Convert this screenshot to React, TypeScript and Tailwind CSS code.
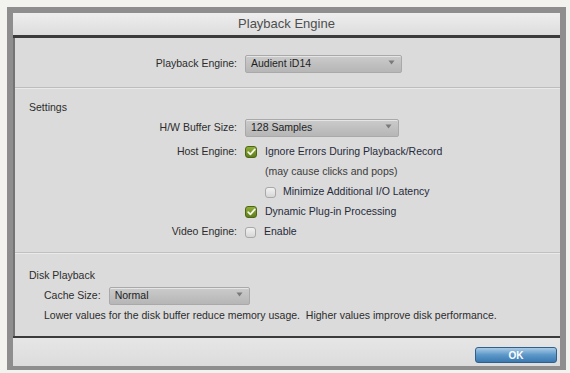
import React from "react";

function Arrow() {
  return (
    <svg width="7" height="5" viewBox="0 0 7 5" className="absolute right-[6px] top-[4px]">
      <path d="M0.5 0.5 L6.5 0.5 L3.5 4.5 Z" fill="#7a7a7a" />
    </svg>
  );
}

function Dropdown({ text, w }: { text: string; w: string }) {
  return (
    <div
      className={`relative ${w} h-[18px] rounded-[2px] border border-[#a9a9a9] bg-gradient-to-b from-[#cbcbcb] to-[#b6b6b6] flex items-center pl-[5px] text-[10.5px] text-[#1e1e1e] shadow-[inset_0_1px_0_rgba(255,255,255,0.5)]`}
    >
      {text}
      <Arrow />
    </div>
  );
}

function Checked() {
  return (
    <div className="w-[12px] h-[12px] rounded-[3px] bg-gradient-to-b from-[#8fae3a] to-[#5f7f1c] border border-[#4f6614] flex items-center justify-center">
      <svg width="9" height="8" viewBox="0 0 9 8">
        <path d="M1.2 4.2 L3.4 6.3 L7.8 1.4" stroke="#f4f4e8" strokeWidth="1.8" fill="none" strokeLinecap="round" strokeLinejoin="round" />
      </svg>
    </div>
  );
}

function Unchecked() {
  return <div className="w-[11px] h-[11px] rounded-[3px] bg-gradient-to-b from-[#f2f2f2] to-[#d6d6d6] border border-[#a8a8a8]" />;
}

export default function App() {
  return (
    <div className="w-[570px] h-[373px] bg-[#f2f2ee] pt-[7px] pl-[7px] font-['Liberation_Sans',Arial,sans-serif] overflow-hidden">
      <div className="w-[559px] h-[363px] bg-[#8e8e8e] pt-[6px] px-[6px] pb-[4px] flex flex-col">
        {/* title bar */}
        <div className="h-[22px] bg-gradient-to-b from-[#eeeeee] to-[#dddddd] flex items-center justify-center text-[13px] text-[#4e4e4e]">
          Playback Engine
        </div>
        <div className="h-[3px] bg-[#3b3b3b]" />
        {/* content */}
        <div className="h-[298px] bg-[#dbdbdb] flex flex-col text-[10.5px] text-[#2c2c2c] border-l-2 border-[#747474]">
          {/* section 1 */}
          <div className="h-[50px] border-b border-[#bdbdbd] pt-[17px]">
            <div className="flex items-center h-[18px]">
              <div className="w-[222px] text-right">Playback Engine:</div>
              <div className="ml-[8px]">
                <Dropdown text="Audient iD14" w="w-[157px]" />
              </div>
            </div>
          </div>
          {/* section 2 */}
          <div className="h-[165px] border-b border-[#c0c0c0] border-t border-t-[#e9e9e9] pt-[11px]">
            <div className="h-[14px] leading-[14px] pl-[14px]">Settings</div>
            <div className="mt-[5px] flex items-center h-[18px]">
              <div className="w-[222px] text-right">H/W Buffer Size:</div>
              <div className="ml-[8px]">
                <Dropdown text="128 Samples" w="w-[154px]" />
              </div>
            </div>
            <div className="mt-[5px] flex items-center h-[20px]">
              <div className="w-[222px] text-right">Host Engine:</div>
              <div className="ml-[8px] flex items-center gap-[8px] text-[#262a3a]">
                <Checked />
                <span>Ignore Errors During Playback/Record</span>
              </div>
            </div>
            <div className="flex items-center h-[20px] pl-[250px] text-[#3a3a3a]">(may cause clicks and pops)</div>
            <div className="flex items-center h-[20px] pl-[250px] gap-[7px] text-[#262a3a]">
              <Unchecked />
              <span>Minimize Additional I/O Latency</span>
            </div>
            <div className="flex items-center h-[20px] pl-[230px] gap-[8px] text-[#262a3a]">
              <Checked />
              <span>Dynamic Plug-in Processing</span>
            </div>
            <div className="flex items-center h-[20px]">
              <div className="w-[222px] text-right">Video Engine:</div>
              <div className="ml-[8px] flex items-center gap-[8px] text-[#262a3a]">
                <Unchecked />
                <span>Enable</span>
              </div>
            </div>
          </div>
          {/* section 3 */}
          <div className="flex-1 border-t border-[#eaeaea] pt-[14px]">
            <div className="h-[14px] leading-[14px] pl-[14px]">Disk Playback</div>
            <div className="mt-[5px] flex items-center h-[17px] pl-[29px]">
              <span>Cache Size:</span>
              <div className="ml-[8px]">
                <Dropdown text="Normal" w="w-[141px]" />
              </div>
            </div>
            <div className="mt-[4px] h-[14px] leading-[14px] pl-[29px] whitespace-pre">
              {"Lower values for the disk buffer reduce memory usage.  Higher values improve disk performance."}
            </div>
          </div>
        </div>
        <div className="h-[2px] bg-[#3b3b3b]" />
        {/* bottom bar */}
        <div className="h-[28px] bg-gradient-to-b from-[#e6e6e6] to-[#dcdcdc] flex justify-end items-start pt-[9px] pr-[3px]">
          <div className="w-[82px] h-[16px] rounded-[3px] border border-[#2f5f8c] bg-gradient-to-b from-[#a9cbe6] via-[#5b97c8] to-[#3c79b0] flex items-center justify-center text-[10px] font-bold text-white">
            OK
          </div>
        </div>
      </div>
    </div>
  );
}
